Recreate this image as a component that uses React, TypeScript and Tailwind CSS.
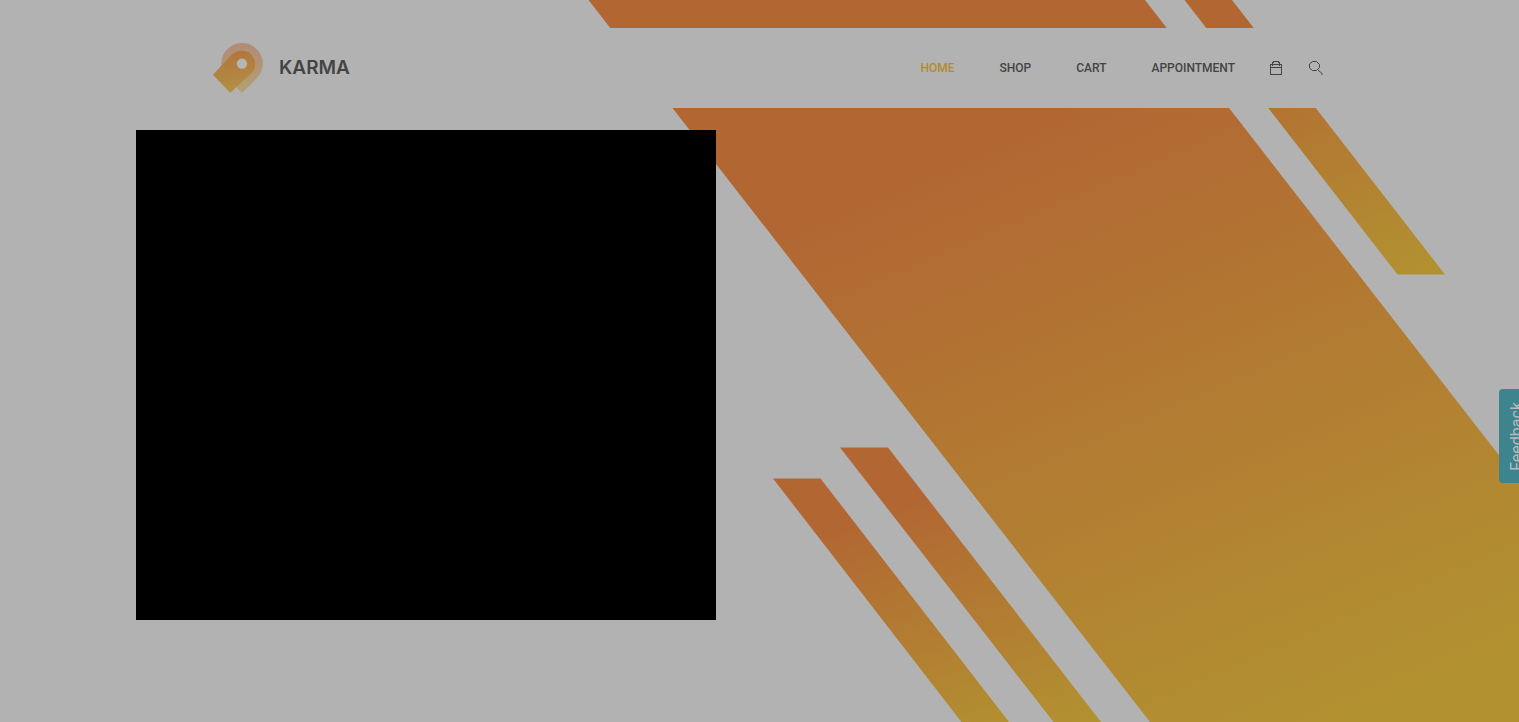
import React from "react";

const links = ["Home", "Shop", "Cart", "Appointment"];

function HeroStripes() {
  return (
    <svg
      className="absolute inset-0 h-full w-full"
      viewBox="0 0 1519 722"
      preserveAspectRatio="xMidYMin slice"
      aria-hidden="true"
    >
      <defs>
        <linearGradient id="wide" gradientUnits="userSpaceOnUse" x1="880" y1="190" x2="1141" y2="797">
          <stop offset="0" stopColor="#b26733" />
          <stop offset="1" stopColor="#b29131" />
        </linearGradient>
        <linearGradient id="upper" gradientUnits="userSpaceOnUse" x1="1230" y1="31" x2="1335" y2="304">
          <stop offset="0" stopColor="#b26733" />
          <stop offset="1" stopColor="#b29131" />
        </linearGradient>
        <linearGradient id="inner" gradientUnits="userSpaceOnUse" x1="905" y1="505" x2="995" y2="753">
          <stop offset="0" stopColor="#b26733" />
          <stop offset="1" stopColor="#b29131" />
        </linearGradient>
        <linearGradient id="outer" gradientUnits="userSpaceOnUse" x1="840" y1="530" x2="926" y2="760">
          <stop offset="0" stopColor="#b26733" />
          <stop offset="1" stopColor="#b29131" />
        </linearGradient>
      </defs>
      <polygon points="588.5,0 1145,0 1706.5,722 1150,722" fill="url(#wide)" />
      <polygon points="1184.5,0 1232,0 1445,274.5 1397.5,274.5" fill="url(#upper)" />
      <polygon points="840,447.5 888,447.5 1101,722 1053.5,722" fill="url(#inner)" />
      <polygon points="773,478.5 820.5,478.5 1009,722 961.5,722" fill="url(#outer)" />
    </svg>
  );
}

function LogoMark() {
  return (
    <svg className="h-13 w-13" viewBox="0 0 156 156" aria-hidden="true">
      <defs>
        <linearGradient id="halo" x1="0" y1="0" x2="0" y2="1">
          <stop offset="0" stopColor="#b28b75" />
          <stop offset="1" stopColor="#b2a074" />
        </linearGradient>
        <linearGradient id="pin" x1="0.3" y1="0" x2="0.5" y2="1">
          <stop offset="0" stopColor="#b2733d" />
          <stop offset="1" stopColor="#b29243" />
        </linearGradient>
      </defs>
      <path d="M90 3a62 62 0 0 1 44 106L90 153L46 109A62 62 0 0 1 90 3Z" fill="url(#halo)" />
      <path d="M55 153L3 98L59 38Q72 26 90 26A40 40 0 0 1 118 94L73 135Z" fill="url(#pin)" />
      <circle cx="90" cy="65" r="15.5" fill="#b5b5b5" />
    </svg>
  );
}

function BagIcon() {
  return (
    <svg className="h-4 w-3" viewBox="0 0 12 16" fill="none" stroke="#444" shapeRendering="crispEdges" aria-hidden="true">
      <path d="M0.5 4.5H11.5V14.5H0.5ZM0.5 7.5H11.5M2.5 6V2.5H3.5V1.5H8.5V2.5H9.5V6M2.5 4.5H9.5" />
    </svg>
  );
}

function SearchIcon() {
  return (
    <svg className="h-4 w-3.5" viewBox="0 0 14 16" fill="none" stroke="#444" aria-hidden="true">
      <path d="M3.5 1.5H7.5L10.5 4.5V7.5L7.5 10.5H3.5L0.5 8V4ZM9 10L13 13.5V15" />
    </svg>
  );
}

export default function App() {
  return (
    <div className="relative min-h-screen overflow-hidden bg-[#b2b2b2] font-[Roboto,sans-serif]">
      <HeroStripes />
      <div className="relative pt-7">
        <header className="flex h-20 w-full items-center justify-between bg-[#b2b2b2] pr-[196px] pl-[212px] text-[#444]">
          <a href="#home" aria-label="Karma" className="flex items-center gap-[15px]">
            <LogoMark />
            <span className="font-[Inter,sans-serif] text-[19px] leading-6 font-semibold">KARMA</span>
          </a>
          <div className="flex items-center">
            <nav className="flex gap-[45px]">
              {links.map((label, i) => (
                <a
                  key={label}
                  href={`#${label.toLowerCase()}`}
                  className={
                    i === 0
                      ? "text-xs font-medium text-[#b28b2b] uppercase"
                      : "text-xs font-medium uppercase"
                  }
                >
                  {label}
                </a>
              ))}
            </nav>
            <a href="#bag" aria-label="Shopping bag" className="ml-[35px]">
              <BagIcon />
            </a>
            <button type="button" aria-label="Search" className="ml-[27px]">
              <SearchIcon />
            </button>
          </div>
        </header>
        <main className="pt-[22px] pl-[136px]">
          <section aria-label="Video" className="h-[490px] w-full max-w-[580px] bg-black" />
        </main>
      </div>
      <button
        type="button"
        className="absolute top-[389px] -right-4 flex h-[94px] w-9 items-center justify-center rounded-sm bg-[#3e848f] text-base leading-5 text-[#b9b9b9]"
      >
        <span className="rotate-180 [writing-mode:vertical-rl]">Feedback</span>
      </button>
    </div>
  );
}
